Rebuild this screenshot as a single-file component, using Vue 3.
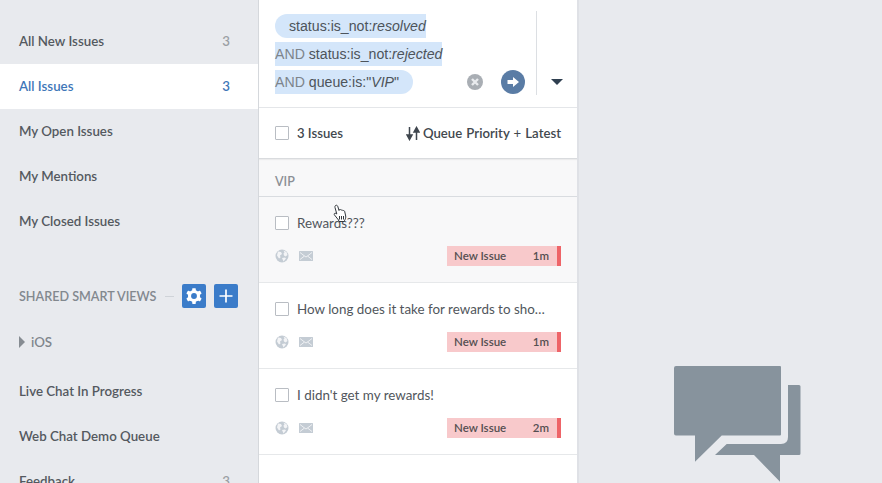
<script setup>
const topViews = [
  { name: 'All New Issues', count: 3 },
  { name: 'All Issues', count: 3, active: true },
  { name: 'My Open Issues' },
  { name: 'My Mentions' },
  { name: 'My Closed Issues' }
]
const sharedViews = [
  { name: 'Live Chat In Progress' },
  { name: 'Web Chat Demo Queue' },
  { name: 'Feedback', count: 3 }
]
const issues = [
  { title: 'Rewards???', age: '1m', hover: true },
  { title: 'How long does it take for rewards to sho…', age: '1m' },
  { title: "I didn't get my rewards!", age: '2m' }
]
</script>

<template>
  <div class="app">
    <aside class="sidebar">
      <nav class="top-views">
        <a v-for="v in topViews" :key="v.name" class="view" :class="{ active: v.active }">
          <span>{{ v.name }}</span><span class="count">{{ v.count }}</span>
        </a>
      </nav>
      <div class="shared-head">
        <span class="shared-title">SHARED SMART VIEWS</span>
        <span class="dash"></span>
        <button class="square">
          <svg width="18" height="18" viewBox="0 0 16 16"><g fill="#fff"><circle cx="8" cy="8" r="5.4"/><rect x="6.4" y="1" width="3.2" height="14" rx=".6"/><rect x="6.4" y="1" width="3.2" height="14" rx=".6" transform="rotate(60 8 8)"/><rect x="6.4" y="1" width="3.2" height="14" rx=".6" transform="rotate(120 8 8)"/></g><circle cx="8" cy="8" r="2.6" fill="#3b7cc9"/></svg>
        </button>
        <button class="square">
          <svg width="16" height="16" viewBox="0 0 16 16"><path d="M8 1.5v13M1.5 8h13" stroke="#fff" stroke-width="1.7" fill="none"/></svg>
        </button>
      </div>
      <div class="folder"><i class="tri"></i>iOS</div>
      <a v-for="v in sharedViews" :key="v.name" class="view">
        <span>{{ v.name }}</span><span class="count">{{ v.count }}</span>
      </a>
    </aside>

    <section class="panel">
      <div class="query">
        <div class="query-lines">
          <div class="line"><span class="hl first">status:is_not:<em>resolved</em></span></div>
          <div class="line"><span class="hl"><b>AND</b> status:is_not:<em>rejected</em></span></div>
          <div class="line"><span class="hl last"><b>AND</b> queue:is:"<em>VIP</em>"</span></div>
        </div>
        <div class="query-actions">
          <svg class="clear" width="16" height="16" viewBox="0 0 16 16"><circle cx="8" cy="8" r="8" fill="#a9aeb4"/><path d="M5 5l6 6M11 5l-6 6" stroke="#e9ebee" stroke-width="2.4"/></svg>
          <svg class="go" width="24" height="24" viewBox="0 0 24 24"><circle cx="12" cy="12" r="12" fill="#5a7ca5"/><path d="M6.500 10h5.500V7l6 5-6 5v-3H6.500z" fill="#fff"/></svg>
        </div>
        <div class="query-menu"><i class="caret"></i></div>
      </div>

      <div class="toolbar">
        <label class="check"></label>
        <strong class="total">3 Issues</strong>
        <span class="sort">
          <svg width="14" height="15" viewBox="0 0 14 15"><path d="M3.500 1v9.500M1 9l2.500 4.500L6 9zM10.500 14V4.500M8 6l2.500-4.500L13 6z" fill="#3f464e" stroke="#3f464e" stroke-width="1.500"/></svg>
          <span>Queue Priority <span class="plus">+</span> Latest</span>
        </span>
      </div>

      <div class="group">VIP</div>

      <article v-for="i in issues" :key="i.title" class="issue" :class="{ hover: i.hover }">
        <div class="issue-title">
          <label class="check"></label>
          <span class="title-text">{{ i.title }}</span>
        </div>
        <div class="issue-meta">
          <svg width="14" height="14" viewBox="0 0 14 14"><circle cx="7" cy="7" r="6.500" fill="#c4ccd4"/><path d="M3 2.500l3 .5 1 2-2 1.500.5 2-1.500 1-2-3zM8.500 1.500l3 1.500 1 3-2 1.500-1.500-1-.5-2 1-1z" fill="#f3f4f6"/><path d="M7 9l3-.5 1 1-2.500 3z" fill="#f3f4f6"/></svg>
          <svg class="mail" width="14" height="10" viewBox="0 0 14 10"><rect width="14" height="10" rx=".5" fill="#c4ccd4"/><path d="M1 1.500L5.500 5 1 8.500M13 1.500L8.500 5 13 8.500M5.500 5L7 6l1.500-1" fill="none" stroke="#f3f4f6" stroke-width=".9"/></svg>
          <span class="status"><span>New Issue</span><span>{{ i.age }}</span></span>
        </div>
      </article>
    </section>

    <div class="empty">
      <svg class="chat" width="127" height="117" viewBox="0 0 127 117">
        <path d="M2 1h104a1 1 0 0 1 1 1v67.500a1 1 0 0 1-1 1H47.700L21 96.700V70.500H2a2 2 0 0 1-2-2V3a2 2 0 0 1 2-2z" fill="#87939d"/>
        <path d="M114 20h11a1.500 1.500 0 0 1 1.500 1.500V88.500a1.500 1.500 0 0 1-1.500 1.500h-19v26.700L80 90H41l11.700-11H107q7 0 7-7z" fill="#87939d"/>
      </svg>
    </div>

    <svg class="cursor" width="16" height="20" viewBox="0 0 16 20">
      <path d="M3.500 1.500c1-.7 2 0 2.300 1l1.200 4 .3-.8c.8-.5 1.500-.2 1.800.5.700-.5 1.500-.2 1.800.5.800-.4 1.600 0 1.800.8l1 4.500c.2 1.500-.2 3-1 4.200l-.4 1.300H7l-.5-1.500L2.500 11c-.6-.8-.3-1.600.5-1.800.6-.1 1.200.2 1.800.8L3 3.500c-.2-.8 0-1.600.5-2z" fill="#fff" stroke="#33383e" stroke-width="1"/>
      <path d="M7.500 12v3.500M9.500 12v3.500M11.500 12v3.500" stroke="#33383e" stroke-width="1"/>
    </svg>
  </div>
</template>

<style scoped>
.app {
  position: relative;
  display: flex;
  width: 882px;
  height: 483px;
  overflow: hidden;
  background: #e8eaee;
  font-family: Lato, "Open Sans", sans-serif;
  color: #51565c;
}
.sidebar {
  flex: none;
  width: 258px;
  height: 483px;
  overflow: hidden;
  padding-top: 19px;
  box-sizing: border-box;
}
.top-views { margin-bottom: 40px; }
.view {
  display: flex;
  justify-content: space-between;
  align-items: center;
  box-sizing: border-box;
  height: 45px;
  padding: 0 28px 2px 19px;
  font-size: 13.300px;
  font-weight: 600;
  color: #54595f;
}
.view.active { background: #fff; color: #3f77b8; }
.count { color: #9b9fa4; }
.view.active .count { color: #3f77b8; }
.shared-head {
  display: flex;
  align-items: center;
  height: 24px;
  padding-left: 19px;
}
.shared-title {
  flex: none;
  width: 137px;
  white-space: nowrap;
  font-size: 12.600px;
  font-weight: 600;
  color: #82888e;
}
.dash {
  width: 9px;
  height: 1px;
  margin: 0 8px 0 9px;
  background: #cfd3d8;
}
.square {
  display: flex;
  align-items: center;
  justify-content: center;
  width: 24px;
  height: 24px;
  margin-right: 8px;
  padding: 0;
  border: 0;
  border-radius: 2px;
  background: #3b7cc9;
}
.square:last-child { margin-right: 0; }
.folder {
  display: flex;
  align-items: center;
  height: 24px;
  margin: 22px 0 15px;
  padding-left: 19px;
  font-size: 13.300px;
  font-weight: 600;
  color: #80868c;
}
.tri {
  width: 0;
  height: 0;
  margin-right: 6px;
  border-left: 6px solid #868c92;
  border-top: 6px solid transparent;
  border-bottom: 6px solid transparent;
}
.panel {
  flex: none;
  width: 318px;
  height: 483px;
  overflow: hidden;
  background: #fff;
  border-left: 1px solid #d5d8dc;
  box-shadow: 2px 0 0 #dfe1e6;
}
.query {
  display: flex;
  height: 108px;
  box-sizing: border-box;
  border-bottom: 1px solid #e4e6e9;
  padding: 11px 0 12px 16px;
}
.query-lines {
  flex: none;
  padding-top: 3px;
  font-family: "Liberation Sans", Arial, sans-serif;
  font-size: 14.150px;
  color: #4d545b;
}
.line { display: flex; height: 28px; }
.hl {
  height: 24px;
  line-height: 24px;
  background: #d4e6fa;
}
.hl b { font-weight: 400; color: #7d848b; }
.first { padding-left: 14px; border-radius: 12px 0 0 12px; }
.last { padding-right: 14px; border-radius: 0 12px 12px 0; }
.query-actions {
  flex: 1;
  display: flex;
  align-items: flex-end;
  justify-content: flex-end;
  padding: 0 11px 1px 0;
}
.clear { margin: 0 18px 4px 0; }
.query-menu {
  flex: none;
  width: 41px;
  border-left: 1px solid #dcdfe3;
  display: flex;
  justify-content: center;
  align-items: flex-end;
  padding-bottom: 10px;
  box-sizing: border-box;
}
.caret {
  border-top: 6px solid #2f3f50;
  border-left: 6px solid transparent;
  border-right: 6px solid transparent;
}
.toolbar {
  position: relative;
  display: flex;
  align-items: center;
  height: 50px;
  padding: 0 16px;
  font-size: 13.100px;
  border-bottom: 1px solid #d9dbde;
  box-shadow: 0 1px 1px rgba(0, 0, 0, .05);
  color: #42484e;
}
.check {
  flex: none;
  width: 12px;
  height: 12px;
  border: 1px solid #b9bdc3;
  background: #fff;
  border-radius: 1px;
}
.total { margin-left: 8px; font-weight: 600; }
.sort {
  margin-left: auto;
  display: flex;
  align-items: center;
  gap: 3px;
  font-size: 13.200px;
  font-weight: 600;
  word-spacing: .8px;
}
.plus { font-weight: 400; }
.group {
  height: 37px;
  padding-left: 16px;
  background: #f8f8f9;
  border-bottom: 1px solid #d9dce0;
  font-size: 12.500px;
  font-weight: 600;
  color: #8b8f95;
  line-height: 46px;
}
.issue {
  height: 85px;
  border-bottom: 1px solid #e6e8ea;
  padding: 0 16px;
}
.issue.hover { background: #f8f8f9; }
.issue-title {
  display: flex;
  align-items: center;
  padding-top: 17px;
  height: 18px;
}
.title-text {
  margin-left: 8px;
  font-size: 13.400px;
  color: #51565c;
  white-space: nowrap;
}
.issue-meta {
  display: flex;
  align-items: center;
  height: 20px;
  margin-top: 14px;
}
.mail { margin-left: 10px; }
.status {
  margin-left: auto;
  display: flex;
  justify-content: space-between;
  align-items: center;
  box-sizing: border-box;
  width: 114px;
  height: 20px;
  padding: 0 8px 1px 7px;
  background: #f8c9cb;
  border-right: 4px solid #ee6468;
  font-size: 11.500px;
  font-weight: 600;
  color: #544f51;
}
.empty {
  flex: 1;
  position: relative;
}
.chat {
  position: absolute;
  left: 97px;
  top: 365px;
}
.cursor {
  position: absolute;
  left: 332px;
  top: 204px;
}
</style>
